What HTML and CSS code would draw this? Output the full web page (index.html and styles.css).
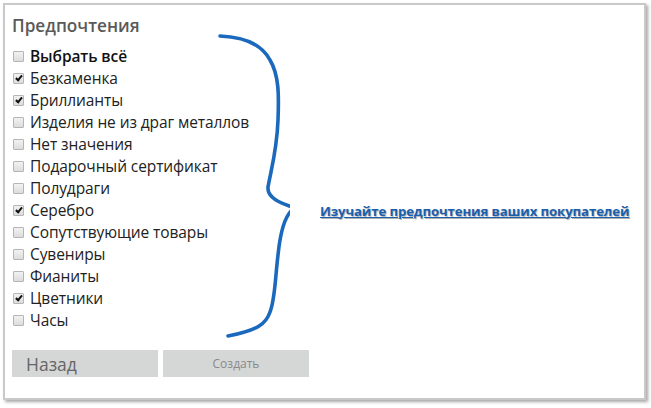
FILE: index.html
```html
<!DOCTYPE html>
<html lang="ru">
<head>
<meta charset="utf-8">
<link rel="stylesheet" href="styles.css">
</head>
<body>
<div class="frame">
  <div class="left">
    <div class="title">Предпочтения</div>
    <ul class="list">
      <li class="bold"><span class="cb"></span>Выбрать всё</li>
      <li><span class="cb on"></span>Безкаменка</li>
      <li><span class="cb on"></span>Бриллианты</li>
      <li><span class="cb"></span>Изделия не из драг металлов</li>
      <li><span class="cb"></span>Нет значения</li>
      <li><span class="cb"></span>Подарочный сертификат</li>
      <li><span class="cb"></span>Полудраги</li>
      <li><span class="cb on"></span>Серебро</li>
      <li><span class="cb"></span>Сопутствующие товары</li>
      <li><span class="cb"></span>Сувениры</li>
      <li><span class="cb"></span>Фианиты</li>
      <li><span class="cb on"></span>Цветники</li>
      <li><span class="cb"></span>Часы</li>
    </ul>
    <div class="buttons">
      <div class="btn back">Назад</div>
      <div class="btn create">Создать</div>
    </div>
  </div>
  <svg class="brace" width="90" height="320" viewBox="200 25 90 320">
    <path d="M220 36 C245 37 262 45 270 60 C279 75 279 95 278 120 C277 150 271 170 268 187 C267 198 280 203 295 208 C287 212 281 225 278 255 C275 280 275 300 270 312 C266 324 258 330 228 336" fill="none" stroke="#1b69bd" stroke-width="3.6" stroke-linecap="round" stroke-linejoin="round"/>
  </svg>
  <div class="right">
    <a class="link" href="#">Изучайте предпочтения ваших покупателей</a>
  </div>
</div>
</body>
</html>
```

FILE: styles.css
```css
html, body {
  margin: 0;
  padding: 0;
  background: #ffffff;
}
body {
  width: 651px;
  height: 408px;
  overflow: hidden;
  font-family: "Open Sans", "Liberation Sans", sans-serif;
}
.frame {
  position: relative;
  margin: 3px 0 0 3px;
  width: 639px;
  height: 393px;
  border: 2px solid #c9c9c9;
  box-shadow: 2px 2px 3px rgba(0,0,0,0.35);
  background: #fff;
  display: flex;
}
.left {
  padding: 11px 0 0 7px;
  width: 300px;
}
.title {
  font-size: 17.2px;
  font-weight: 600;
  color: #5a5a5a;
  line-height: 20px;
  margin-bottom: 9px;
}
.list {
  list-style: none;
  margin: 0;
  padding: 0;
}
.list li {
  display: flex;
  align-items: center;
  height: 22px;
  font-size: 15.5px;
  color: #222;
  letter-spacing: -0.1px;
}
.list li.bold {
  font-weight: 600;
  color: #111;
}
.cb {
  width: 9px;
  height: 9px;
  border: 1px solid #b5b5b5;
  border-radius: 1px;
  background: linear-gradient(#f2f2f2, #dcdcdc);
  margin: 0 6px 0 1px;
  position: relative;
  flex: none;
}
.cb.on::after {
  content: "";
  position: absolute;
  left: 3px;
  top: 0px;
  width: 2px;
  height: 5px;
  border: solid #111;
  border-width: 0 2px 2px 0;
  transform: rotate(40deg);
}
.buttons {
  display: flex;
  gap: 5px;
  margin-top: 19px;
}
.btn {
  width: 146px;
  height: 27px;
  background: #d5d6d6;
  display: flex;
  align-items: center;
  color: #666;
}
.back {
  font-size: 17.5px;
  padding-left: 14px;
  width: 132px;
}
.create {
  font-size: 12px;
  justify-content: center;
  color: #8a8a8a;
}
.brace {
  position: absolute;
  left: 195px;
  top: 20px;
}
.right {
  display: flex;
  align-items: center;
  padding-left: 8px;
  padding-top: 18px;
}
.link {
  font-size: 13.2px;
  font-weight: 700;
  color: #1a5fae;
  text-decoration: underline;
  text-shadow: 1px 1px 1px rgba(0,0,0,0.3);
  letter-spacing: -0.1px;
}
```
